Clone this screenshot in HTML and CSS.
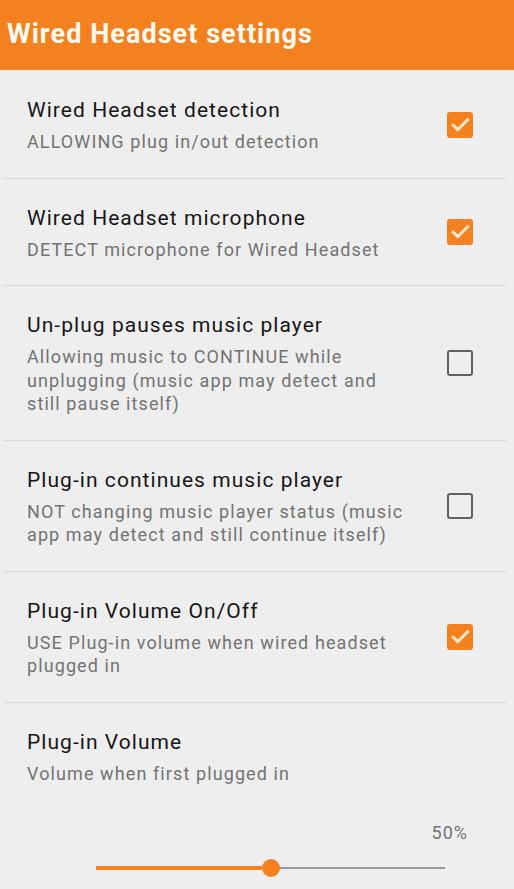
FILE: index.html
```html
<!DOCTYPE html>
<html>
<head>
<meta charset="utf-8">
<link rel="stylesheet" href="styles.css">
</head>
<body>
<header class="appbar"><h1 class="appbar-title">Wired Headset settings</h1></header>
<main class="list">
  <div class="pref">
    <div class="pref-text">
      <div class="pref-title">Wired Headset detection</div>
      <div class="pref-summary">ALLOWING plug in/out detection</div>
    </div>
    <div class="cb cb-on"><svg viewBox="0 0 26 26" width="26" height="26"><polyline points="6.3,13.2 10.8,17.6 20.6,7.8" /></svg></div>
  </div>
  <div class="pref">
    <div class="pref-text">
      <div class="pref-title">Wired Headset microphone</div>
      <div class="pref-summary">DETECT microphone for Wired Headset</div>
    </div>
    <div class="cb cb-on"><svg viewBox="0 0 26 26" width="26" height="26"><polyline points="6.3,13.2 10.8,17.6 20.6,7.8" /></svg></div>
  </div>
  <div class="pref">
    <div class="pref-text">
      <div class="pref-title">Un-plug pauses music player</div>
      <div class="pref-summary">Allowing music to CONTINUE while unplugging (music app may detect and still pause itself)</div>
    </div>
    <div class="cb cb-off"></div>
  </div>
  <div class="pref">
    <div class="pref-text">
      <div class="pref-title">Plug-in continues music player</div>
      <div class="pref-summary">NOT changing music player status (music app may detect and still continue itself)</div>
    </div>
    <div class="cb cb-off"></div>
  </div>
  <div class="pref">
    <div class="pref-text">
      <div class="pref-title">Plug-in Volume On/Off</div>
      <div class="pref-summary">USE Plug-in volume when wired headset plugged in</div>
    </div>
    <div class="cb cb-on"><svg viewBox="0 0 26 26" width="26" height="26"><polyline points="6.3,13.2 10.8,17.6 20.6,7.8" /></svg></div>
  </div>
  <div class="pref pref-volume">
    <div class="pref-text">
      <div class="pref-title">Plug-in Volume</div>
      <div class="pref-summary">Volume when first plugged in</div>
    </div>
    <div class="vol-value">50%</div>
    <div class="slider">
      <div class="slider-fill"></div>
      <div class="slider-thumb"></div>
      <div class="slider-rest"></div>
    </div>
  </div>
</main>
</body>
</html>
```
FILE: styles.css
```css
* { box-sizing: border-box; }
html, body {
  margin: 0;
  padding: 0;
  background: #eeeeee;
  font-family: Roboto, "Noto Sans", sans-serif;
}
.appbar {
  height: 70px;
  background: #f4811f;
  display: flex;
  align-items: center;
  padding-left: 7px;
}
.appbar-title {
  margin: 0;
  margin-top: -2px;
  font-size: 27px;
  font-weight: 700;
  color: #fffaf0;
  letter-spacing: 1.05px;
}
.list { display: flex; flex-direction: column; }
.pref {
  display: flex;
  align-items: center;
  padding: 26px 41px 23px 27px;
  position: relative;
}
.pref + .pref::before {
  content: "";
  position: absolute;
  top: 0;
  left: 3px;
  right: 7px;
  height: 1px;
  background: #dadada;
}
.pref + .pref { border-top: 1px solid transparent; }
.pref-text { flex: 1; padding-right: 34px; }
.pref-title {
  font-size: 21px;
  line-height: 28px;
  letter-spacing: 1.05px;
  color: #161616;
}
.pref-summary {
  margin-top: 6px;
  font-size: 18px;
  line-height: 23.5px;
  letter-spacing: 1.1px;
  color: #737373;
}
.cb {
  width: 26px;
  height: 26px;
  flex: none;
  border-radius: 3px;
}
.cb-on { background: #f4811f; }
.cb-on svg { display: block; }
.cb-on polyline {
  fill: none;
  stroke: #fde6cc;
  stroke-width: 3px;
  stroke-linecap: square;
  stroke-linejoin: miter;
}
.cb-off { border: 2.5px solid #606060; }
.pref-volume {
  flex-wrap: wrap;
  padding-bottom: 0;
}
.pref-volume .pref-text { flex: 1 0 100%; }
.vol-value {
  flex: 1 0 100%;
  text-align: right;
  padding-right: 5px;
  margin-top: 36px;
  font-size: 18px;
  line-height: 23px;
  letter-spacing: 1px;
  color: #737373;
}
.slider {
  flex: none;
  margin-left: 69px;
  margin-top: 15px;
  width: 349px;
  height: 18px;
  display: flex;
  align-items: center;
}
.slider-fill {
  width: 166px;
  height: 4px;
  background: #f4811f;
}
.slider-thumb {
  width: 18px;
  height: 18px;
  border-radius: 50%;
  background: #f4811f;
  flex: none;
}
.slider-rest {
  flex: 1;
  height: 1.5px;
  background: #9a9a9a;
}
```
